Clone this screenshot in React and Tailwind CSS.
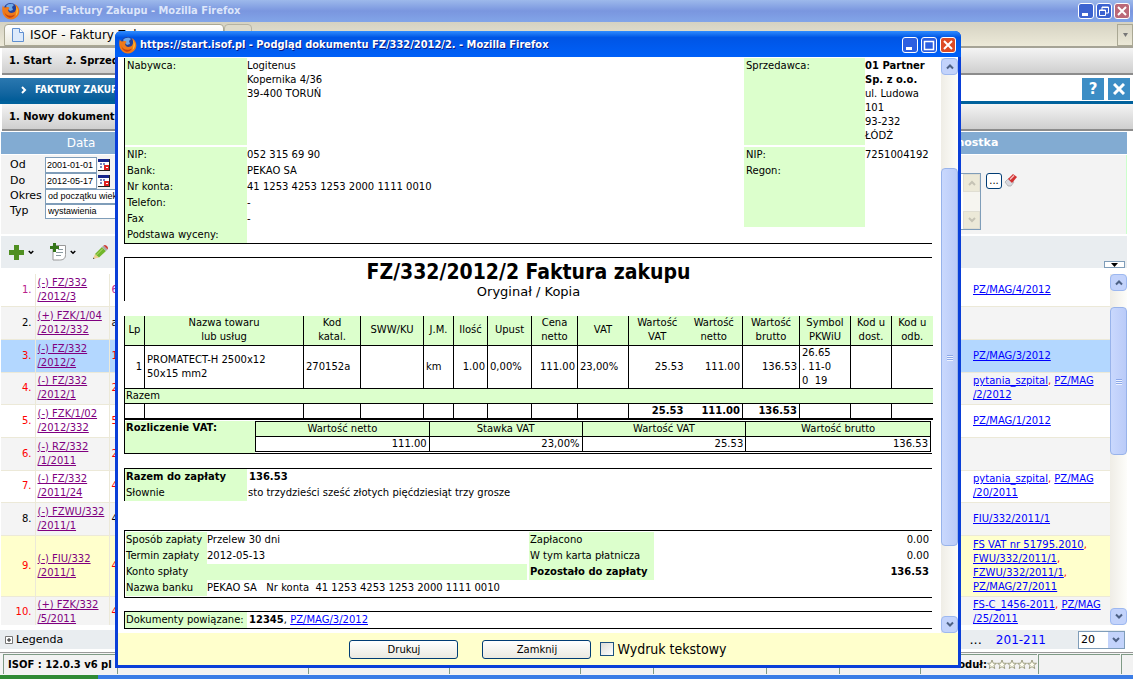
import React from "react";

const ROWS = [
  { no: "1.", color: "text-[#b8208c]", doc: ["(-) FZ/332", "/2012/3"], extra: "6", bg: "bg-white", links: [["PZ/MAG/4/2012"]] },
  { no: "2.", color: "text-black", doc: ["(+) FZK/1/04", "/2012/332"], extra: "a", bg: "bg-[#f4f4f4]", links: [] },
  { no: "3.", color: "text-[#ff0000]", doc: ["(-) FZ/332", "/2012/2"], extra: "1", bg: "bg-[#b3d7ff]", links: [["PZ/MAG/3/2012"]] },
  { no: "4.", color: "text-[#ff0000]", doc: ["(-) FZ/332", "/2012/1"], extra: "2", bg: "bg-[#f4f4f4]", links: [["pytania_szpital", "PZ/MAG"], ["/2/2012"]] },
  { no: "5.", color: "text-[#ff0000]", doc: ["(-) FZK/1/02", "/2012/332"], extra: "5", bg: "bg-white", links: [["PZ/MAG/1/2012"]] },
  { no: "6.", color: "text-[#ff0000]", doc: ["(-) RZ/332", "/1/2011"], extra: "2", bg: "bg-[#f4f4f4]", links: [] },
  { no: "7.", color: "text-[#ff0000]", doc: ["(-) FZ/332", "/2011/24"], extra: "4", bg: "bg-white", links: [["pytania_szpital", "PZ/MAG"], ["/20/2011"]] },
  { no: "8.", color: "text-black", doc: ["(-) FZWU/332", "/2011/1"], extra: "4", bg: "bg-[#f4f4f4]", links: [["FIU/332/2011/1"]] },
  { no: "9.", color: "text-[#ff0000]", doc: ["(-) FIU/332", "/2011/1"], extra: "4", bg: "bg-[#ffffcc]", links: [["FS VAT nr 51795.2010", ""], ["FWU/332/2011/1", ""], ["FZWU/332/2011/1", ""], ["PZ/MAG/27/2011"]] },
  { no: "10.", color: "text-[#ff0000]", doc: ["(+) FZK/332", "/5/2011"], extra: "4", bg: "bg-[#f4f4f4]", links: [["FS-C_1456-2011", "PZ/MAG"], ["/25/2011"]] },
];

const ITEM_COLUMNS = [
  { label: ["Lp"], width: "w-[20px]", value: ["1"], align: "text-right" },
  { label: ["Nazwa towaru", "lub usług"], width: "w-[159px]", value: ["PROMATECT-H 2500x12", "50x15 mm2"], align: "text-left" },
  { label: ["Kod", "katal."], width: "w-[57px]", value: ["270152a"], align: "text-left" },
  { label: ["SWW/KU"], width: "w-[63px]", value: [] },
  { label: ["J.M."], width: "w-[30px]", value: ["km"], align: "text-left" },
  { label: ["Ilość"], width: "w-[34px]", value: ["1.00"], align: "text-right" },
  { label: ["Upust"], width: "w-[44px]", value: ["0,00%"], align: "text-left" },
  { label: ["Cena", "netto"], width: "w-[46px]", value: ["111.00"], align: "text-right" },
  { label: ["VAT"], width: "w-[51px]", value: ["23,00%"], align: "text-left" },
  { label: ["Wartość", "VAT"], width: "w-[57px]", value: ["25.53"], align: "text-right", total: "25.53" },
  { label: ["Wartość", "netto"], width: "w-[57px]", value: ["111.00"], align: "text-right", total: "111.00", open: true },
  { label: ["Wartość", "brutto"], width: "w-[57px]", value: ["136.53"], align: "text-right", total: "136.53" },
  { label: ["Symbol", "PKWiU"], width: "w-[51px]", value: ["26.65", ". 11-0", "0  19"], align: "text-left" },
  { label: ["Kod u", "dost."], width: "w-[41px]", value: [] },
  { label: ["Kod u", "odb."], width: "w-[41px]", value: [] },
];

const VAT_COLUMNS = [
  { label: "Wartość netto", value: "111.00", width: "w-[174px]" },
  { label: "Stawka VAT", value: "23,00%", width: "w-[153px]" },
  { label: "Wartość VAT", value: "25.53", width: "w-[164px]" },
  { label: "Wartość brutto", value: "136.53", width: "w-[185px]" },
];

function FirefoxIcon() {
  return (
    <svg className="h-[18px] w-[18px] shrink-0" viewBox="0 0 18 18">
      <circle cx="8.5" cy="8" r="7" fill="#23419a" />
      <path d="M4 4c2-2.500 6-3 8-1l-2 2 1 3-3 1-2-2z" fill="#6fa8e8" />
      <path d="M1 3c0 2 1 2 2 2.500C5 4.500 7 5 7.500 6L6 8c.5 3 4 4 7 1.500C15 7 14 4 12.500 2 17 4 18.500 9 16.500 13c-2.500 4.500-9 6-13 2.500C0 12.500-.5 7 1 3z" fill="#ef7a1a" />
      <path d="M2 9c1 4 6 6.500 11 3.500-3 5-9 4.500-11-3.500z" fill="#c9410c" />
      <path d="M14 4c3 4 2 8-.5 10 1-3 1.500-6 .5-10z" fill="#fbc53a" />
    </svg>
  );
}

function Arrow({ up, className }) {
  return (
    <svg className={className} viewBox="0 0 8 6" fill="none" stroke="currentColor" strokeWidth="2">
      <path d={up ? "M1 5l3-3 3 3" : "M1 1l3 3 3-3"} />
    </svg>
  );
}

const winButton = "flex h-4 w-4 shrink-0 items-center justify-center rounded-[3px] border border-white";

function WindowButtons({ active }) {
  const blue = active ? "bg-[#2c5fe0]" : "bg-[#3c63d0]";
  return (
    <div className={`flex shrink-0 ${active ? "gap-[3px]" : "gap-[2px]"}`}>
      <button aria-label="Minimalizuj" className={`${winButton} ${blue}`}>
        <svg className="h-3 w-3" viewBox="0 0 12 12"><path d="M2 8h6v3H2z" fill="#fff" /></svg>
      </button>
      <button aria-label="Maksymalizuj" className={`${winButton} ${blue}`}>
        <svg className="h-3 w-3" viewBox="0 0 12 12" fill="none" stroke="#fff">
          {active ? <path d="M1.500 2.500h9v8h-9zM1 2.500h10" strokeWidth="1.500" /> : <path d="M1.500 5h6v5.500h-6zM4 5V2h6.500v6H8M1.500 5.500h6M4 2.500h6" />}
        </svg>
      </button>
      <button aria-label="Zamknij okno" className={`${winButton} ${active ? "bg-[#dd4a24]" : "bg-[#bb6878]"}`}>
        <svg className="h-3 w-3" viewBox="0 0 12 12"><path d="M2 2l8 8M10 2l-8 8" stroke="#fff" strokeWidth="2" /></svg>
      </button>
    </div>
  );
}

function ScrollBar({ thumb }) {
  const knob = "flex h-[17px] w-full shrink-0 items-center justify-center rounded-sm border border-[#9db8f0] bg-[#c3d3fb] text-[#4d6185]";
  return (
    <div className="flex w-[17px] shrink-0 flex-col bg-gradient-to-r from-[#efede6] to-[#fdfdfa]">
      <button aria-label="W górę" className={knob}><Arrow up className="h-[7px] w-2" /></button>
      <div className="min-h-0 flex-1">
        <div className={`flex w-full flex-col items-center justify-center gap-px rounded-sm border border-[#98b3ea] bg-gradient-to-r from-[#c9d8fd] to-[#bacbf8] ${thumb}`}>
          <span className="h-px w-[6px] bg-[#8ca8e8] shadow-[0_1px_#eef3ff]" />
          <span className="h-px w-[6px] bg-[#8ca8e8] shadow-[0_1px_#eef3ff]" />
          <span className="h-px w-[6px] bg-[#8ca8e8] shadow-[0_1px_#eef3ff]" />
        </div>
      </div>
      <button aria-label="W dół" className={knob}><Arrow className="h-[7px] w-2" /></button>
    </div>
  );
}

function CalendarIcon() {
  return (
    <svg className="h-3 w-3" viewBox="0 0 12 12">
      <path d="M0 0h12v12H0z" fill="#222" />
      <path d="M0 0h11v11H0z" fill="#fff" />
      <path d="M0 0h11v3H0z" fill="#16268c" />
      <path d="M2 4h2v2H2zM5 4h2v2H5zM2 7h2v2H2z" fill="#7888c0" />
      <path d="M6 6h5v5H6z" fill="#e02020" />
      <path d="M8 8h2v1H8z" fill="#fff" />
    </svg>
  );
}

function DateField({ id, label, value }) {
  return (
    <div className="flex h-4 items-center">
      <label htmlFor={id} className="w-[35px]">{label}</label>
      <input id={id} defaultValue={value} className="h-4 w-[52px] border border-[#7f9db9] bg-white pl-px font-['Liberation_Sans',sans-serif] text-[9px]" />
      <button aria-label="Kalendarz" className="ml-px"><CalendarIcon /></button>
    </div>
  );
}

function SelectField({ id, label, value }) {
  return (
    <div className="flex h-[15px] items-center">
      <label htmlFor={id} className="w-[35px]">{label}</label>
      <select id={id} className="h-[15px] w-[110px] appearance-none border border-[#7f9db9] bg-white pl-[2px] font-['Liberation_Sans',sans-serif] text-[9px]">
        <option>{value}</option>
      </select>
    </div>
  );
}

function Toolbar({ items }) {
  return (
    <nav className="ml-[2px] flex h-[27px] shrink-0 items-center gap-[14px] border-b-2 border-[#8c8c8c] bg-gradient-to-b from-[#f4f4f4] to-[#cfcfcf] pl-[7px] text-[10px] font-bold">
      {items.map((item) => (
        <button key={item} className="whitespace-nowrap">{item}</button>
      ))}
    </nav>
  );
}

function DocumentList() {
  return (
    <div className="mr-[6px] ml-px flex min-h-0 flex-1">
      <div className="min-w-0 flex-1 overflow-hidden">
        <table className="w-full table-fixed border-collapse leading-[14px]">
          <colgroup>
            <col className="w-[34px]" />
            <col className="w-[74px]" />
            <col />
            <col className="w-[146px]" />
          </colgroup>
          <tbody>
            {ROWS.map((row) => (
              <tr key={row.no} className={`h-[33px] border-b border-[#ece9d8] nth-[3n+1]:h-8 nth-[9]:h-[61px] ${row.bg}`}>
                <td className={`border-r border-[#ece9d8] py-0 pr-[3px] text-right ${row.color}`}>{row.no}</td>
                <td className="border-r border-[#ece9d8] py-0 pl-[2px] whitespace-nowrap">
                  <a href="#" className="text-[#800080] underline">{row.doc[0]}<br />{row.doc[1]}</a>
                </td>
                <td className={`py-0 pl-[2px] ${row.color}`}>{row.extra}</td>
                <td className="py-0 pl-[9px] whitespace-nowrap">
                  {row.links.map((line, i) => (
                    <div key={i}>
                      {line.map((link, j) => (
                        <React.Fragment key={j}>
                          {j > 0 && <span className="text-[#ff0000]">, </span>}
                          {link && <a href="#" className="text-[#0000ff] underline">{link}</a>}
                        </React.Fragment>
                      ))}
                    </div>
                  ))}
                </td>
              </tr>
            ))}
          </tbody>
        </table>
      </div>
      <ScrollBar thumb="mt-4 h-[148px]" />
    </div>
  );
}

function StatusCell({ className, children }) {
  return (
    <div className={`flex h-5 items-center border-t border-l border-[#7f9a86] bg-[#f2f2f2] text-[10px] leading-4 font-bold whitespace-nowrap ${className}`}>
      {children}
    </div>
  );
}

function MainWindow() {
  return (
    <div className="flex h-screen min-w-0 flex-col overflow-hidden bg-white">
      <header className="flex h-[22px] shrink-0 items-center gap-[3px] bg-gradient-to-b from-[#9db9eb] via-[#7a96df] to-[#82a5e8] pr-[3px] pl-[2px]">
        <FirefoxIcon />
        <span className="flex-1 font-['DejaVu_Sans_Condensed','DejaVu_Sans',sans-serif] text-[11px] font-bold text-[#dde6fa]">ISOF - Faktury Zakupu - Mozilla Firefox</span>
        <WindowButtons />
      </header>
      <div className="flex h-[26px] shrink-0 items-end border-b-2 border-[#a5a396] bg-gradient-to-b from-[#d5d2c2] to-[#ece9d8] pl-1">
        <div className="flex h-[22px] w-[220px] items-center gap-[6px] rounded-t border border-[#aaa894] bg-gradient-to-b from-white to-[#ebe9dc] pl-[7px] text-[12px]">
          <svg className="h-[14px] w-3" viewBox="0 0 12 14"><path d="M.5.5h7l4 4v9H.5z" fill="#dceafb" stroke="#5f8fd0" /><path d="M7.500.5v4h4" fill="#fff" stroke="#5f8fd0" /></svg>
          ISOF - Faktury Zakupu
        </div>
        <div className="h-[22px] w-7 rounded-t border border-[#b5b3a2] bg-[#dedbcb]" />
        <button aria-label="Lista kart" className="ml-auto flex h-[22px] w-4 items-center justify-center border border-[#aaa894] text-[#777]">
          <svg className="h-1 w-[5px]" viewBox="0 0 5 4"><path d="M0 0h5L2.500 4z" fill="currentColor" /></svg>
        </button>
      </div>
      <Toolbar items={["1. Start", "2. Sprzedaż"]} />
      <div className="mt-[3px] flex h-[26px] shrink-0 border-b-[3px] border-[#00619c]">
        <div className="flex w-[640px] items-center bg-gradient-to-b from-[#2a78b0] to-[#005c98] pl-5 font-['DejaVu_Sans_Condensed','DejaVu_Sans',sans-serif] text-[10px] font-bold text-white">
          <Arrow className="mr-[7px] h-[6px] w-2 -rotate-90" />
          FAKTURY ZAKUPU
        </div>
        <div className="flex flex-1 justify-end gap-1 pr-[3px]">
          <button className="h-[22px] w-[22px] bg-[#3c8dc5] text-[15px] leading-[20px] font-bold text-white">?</button>
          <button aria-label="Zamknij" className="flex h-[22px] w-[22px] items-center justify-center bg-[#3c8dc5]">
            <svg className="h-3 w-3" viewBox="0 0 12 12"><path d="M1 1l10 10M11 1L1 11" stroke="#fff" strokeWidth="3" /></svg>
          </button>
        </div>
      </div>
      <Toolbar items={["1. Nowy dokument"]} />
      <section className="mt-px mr-[6px] ml-px flex shrink-0 flex-col">
        <div className="flex h-[22px] items-center justify-between bg-[#82abd2] text-white">
          <h2 className="w-[160px] text-center text-[12px]">Data</h2>
          <h2 className="w-[190px] text-[11px] font-bold">Jednostka</h2>
        </div>
        <div className="mt-px flex h-[79px] justify-between border-r border-[#ccffcc] bg-[#f3f3f3] pl-[9px]">
          <div className="flex flex-col pt-[2px] text-[11px]">
            <DateField id="od" label="Od" value="2001-01-01" />
            <DateField id="do" label="Do" value="2012-05-17" />
            <SelectField id="okres" label="Okres" value="od początku wieku" />
            <SelectField id="typ" label="Typ" value="wystawienia" />
          </div>
          <div className="flex w-[202px] pt-[18px]">
            <div className="flex h-[57px] w-[57px] justify-end border border-[#7f9db9] bg-white">
              <div className="flex w-[17px] flex-col justify-between bg-[#f6f5f0] text-[#c5c3b5]">
                <span className="flex h-[18px] items-center justify-center border border-[#e0ded2] bg-[#ece9d8]"><Arrow up className="h-[6px] w-2" /></span>
                <span className="flex h-[18px] items-center justify-center border border-[#e0ded2] bg-[#ece9d8]"><Arrow className="h-[6px] w-2" /></span>
              </div>
            </div>
            <button className="ml-[5px] h-4 w-4 rounded-[3px] border border-[#003c74] bg-white text-[10px] leading-[12px]">...</button>
            <svg className="ml-[2px] h-[14px] w-[14px]" viewBox="0 0 14 14">
              <path d="M1 9l4-4 5 4-3 4H4z" fill="#d8d8de" stroke="#999" strokeWidth=".6" />
              <path d="M4 6l5-5 4 3-5 6z" fill="#d23030" />
              <path d="M6 6.500l4-4" stroke="#f2c0c0" strokeWidth="1.500" />
            </svg>
          </div>
        </div>
        <div className="mt-[2px] flex h-8 items-center gap-4 bg-[#e9edf0] pl-2">
          <button aria-label="Dodaj" className="flex items-center gap-1">
            <svg className="h-[15px] w-[15px]" viewBox="0 0 15 15"><path d="M5 0h5v5h5v5h-5v5H5v-5H0V5h5z" fill="#4f8f22" /></svg>
            <Arrow className="h-[5px] w-[6px]" />
          </button>
          <button aria-label="Kopiuj" className="flex items-center gap-[3px]">
            <svg className="h-[18px] w-[17px]" viewBox="0 0 17 18">
              <path d="M3 2.500h12.500v9c0 4-2 5.500-6 5.500H3z" fill="#fff" stroke="#999" />
              <path d="M8 6.500h5M6 9.500h7M6 12.500h5" stroke="#8a9aa0" />
              <path d="M3 0h3v3h3v3H6v3H3V6H0V3h3z" fill="#35761a" />
            </svg>
            <Arrow className="h-[5px] w-[6px]" />
          </button>
          <button aria-label="Edytuj">
            <svg className="h-[17px] w-[17px]" viewBox="0 0 17 17">
              <path d="M1 15l2-5 4 3.500z" fill="#f0d090" />
              <path d="M3 10l7-7 4 4-7 6.500z" fill="#72b62c" />
              <path d="M10 3l1.500-1.500 4 4L14 7z" fill="#aaa" />
              <path d="M11.500 1.500C13-.5 17.500 3 15.500 5.500z" fill="#d04038" />
              <path d="M1 15l.5-1.500 1 1z" fill="#222" />
              <path d="M4 11.500l7-7" stroke="#b8e070" />
            </svg>
          </button>
          <button aria-label="Rozwiń" className="mr-[2px] ml-auto flex h-[7px] w-[21px] items-center justify-center self-end border border-[#7f9db9] bg-white">
            <svg className="h-1 w-[7px]" viewBox="0 0 7 4"><path d="M0 0h7L3.500 4z" /></svg>
          </button>
        </div>
      </section>
      <div className="h-[6px] shrink-0" />
      <DocumentList />
      <div className="mt-[5px] mr-2 flex h-[19px] shrink-0 items-center bg-[#e9edf0] pl-[5px] text-[11px] leading-4">
        <button className="flex items-center gap-[3px]">
          <svg className="h-2 w-2" viewBox="0 0 8 8" fill="#fff" stroke="#777"><path d="M.5.5h7v7h-7z" /><path d="M4 2v4M2 4h4" stroke="#222" /></svg>
          Legenda
        </button>
        <span className="ml-auto text-[13px]">...</span>
        <a href="#" className="ml-[14px] text-[12px] text-[#0000ff]">201-211</a>
        <div className="ml-8 grid h-[18px] w-[47px]">
          <select aria-label="Na stronie" className="col-start-1 row-start-1 appearance-none border border-[#7f9db9] bg-white pl-[2px] text-[11px]">
            <option>20</option>
          </select>
          <span className="pointer-events-none col-start-1 row-start-1 my-px mr-px flex w-4 items-center justify-center justify-self-end bg-[#c3d3fb] text-[#4d6185]">
            <Arrow className="h-[6px] w-2" />
          </span>
        </div>
      </div>
      <footer className="mt-[3px] flex h-[23px] shrink-0 items-center gap-px border-t border-[#999] bg-[#f4f4f4] pl-[3px]">
        <StatusCell className="w-[113px] pl-1">ISOF : 12.0.3 v6 pl</StatusCell>
        <StatusCell className="w-[190px]" />
        <StatusCell className="w-[140px]" />
        <StatusCell className="w-[130px]" />
        <StatusCell className="w-[72px]" />
        <StatusCell className="w-[112px]" />
        <StatusCell className="w-[72px]" />
        <StatusCell className="w-[80px]" />
        <StatusCell className="flex-1 justify-end">
          Moduł:
          <svg className="h-[11px] w-[50px]" viewBox="0 0 50 11" fill="#fffef0" stroke="#8c8c6a" strokeWidth=".8">
            {[0, 10, 20, 30, 40].map((x) => (
              <path key={x} d={`M${x + 5} 1l1.200 3.200 3.300.1-2.600 2 .9 3.200L${x + 5} 7.700l-2.800 1.800.9-3.200-2.600-2 3.300-.1z`} />
            ))}
          </svg>
        </StatusCell>
        <StatusCell className="w-[82px]" />
        <StatusCell className="w-3" />
      </footer>
      <div className="flex h-1 shrink-0 bg-[#3a7ce6]"><div className="w-[98px] bg-[#2f8a34]" /></div>
    </div>
  );
}

function PartyLabels({ items, className = "" }) {
  return (
    <div className={`bg-[#dcffcc] pl-[2px] leading-4 ${className}`}>
      {items.map((item) => <div key={item}>{item}</div>)}
    </div>
  );
}

function Parties() {
  return (
    <section className="grid grid-cols-[122px_1fr_121px_67px] gap-y-[2px] border-b border-l border-black">
      <div className="h-[87px] bg-[#dcffcc] pt-px pl-[2px]">Nabywca:</div>
      <div className="pt-px">Logitenus<br />Kopernika 4/36<br />39-400 TORUŃ</div>
      <div className="bg-[#dcffcc] pt-px pl-[2px]">Sprzedawca:</div>
      <div className="pt-px whitespace-nowrap">
        <b>01 Partner<br />Sp. z o.o.</b><br />ul. Ludowa<br />101<br />93-232<br />ŁÓDŹ
      </div>
      <PartyLabels items={["NIP:", "Bank:", "Nr konta:", "Telefon:", "Fax", "Podstawa wyceny:"]} />
      <div className="leading-4">
        <div>052 315 69 90</div>
        <div>PEKAO SA</div>
        <div>41 1253 4253 1253 2000 1111 0010</div>
        <div>-</div>
        <div>-</div>
      </div>
      <PartyLabels items={["NIP:", "Regon:"]} className="mb-4" />
      <div className="leading-4">7251004192</div>
    </section>
  );
}

function Items() {
  return (
    <table className="w-full table-fixed border-collapse">
      <colgroup>
        {ITEM_COLUMNS.map((col, i) => <col key={i} className={col.width} />)}
      </colgroup>
      <thead>
        <tr className="h-[29px] border-b border-black bg-[#dcffcc]">
          {ITEM_COLUMNS.map((col, i) => (
            <th key={i} className={`p-0 text-center font-normal whitespace-nowrap ${col.open ? "" : "border-l border-black"}`}>
              {col.label.map((line) => <div key={line}>{line}</div>)}
            </th>
          ))}
        </tr>
      </thead>
      <tbody>
        <tr className="h-[43px] border-b border-black">
          {ITEM_COLUMNS.map((col, i) => (
            <td key={i} className={`px-[2px] py-0 whitespace-pre ${col.align || ""} ${col.open ? "" : "border-l border-black"}`}>
              {col.value.map((line) => <div key={line}>{line}</div>)}
            </td>
          ))}
        </tr>
        <tr className="h-[15px] border-b border-l border-black bg-[#dcffcc]">
          <td colSpan={15} className="px-px py-0">Razem</td>
        </tr>
        <tr className="h-4 border-b-2 border-black">
          {ITEM_COLUMNS.map((col, i) => (
            <td key={i} className={`px-[2px] py-0 text-right font-bold ${col.open ? "" : "border-l border-black"}`}>{col.total}</td>
          ))}
        </tr>
      </tbody>
    </table>
  );
}

function VatSummary() {
  return (
    <section className="flex border-b border-l border-black pt-px">
      <div className="w-[130px] shrink-0 bg-[#dcffcc] pl-px font-bold">Rozliczenie VAT:</div>
      <table className="mr-px mb-px flex-1 table-fixed border-collapse border border-black">
        <thead>
          <tr className="h-[15px] bg-[#dcffcc]">
            {VAT_COLUMNS.map((col) => <th key={col.label} className={`border border-black p-0 font-normal ${col.width}`}>{col.label}</th>)}
          </tr>
        </thead>
        <tbody>
          <tr className="h-[15px]">
            {VAT_COLUMNS.map((col) => <td key={col.label} className="border border-black py-0 pr-[2px] text-right">{col.value}</td>)}
          </tr>
        </tbody>
      </table>
    </section>
  );
}

function Payment() {
  return (
    <section className="flex border-y border-l border-black py-px pl-px leading-4">
      <div className="min-w-0 flex-1">
        <div className="flex"><span className="w-[81px] bg-[#dcffcc] whitespace-nowrap">Sposób zapłaty</span><span>Przelew 30 dni</span></div>
        <div className="flex"><span className="w-[81px] bg-[#dcffcc] whitespace-nowrap">Termin zapłaty</span><span>2012-05-13</span></div>
        <div className="mr-[2px] bg-[#dcffcc]">Konto spłaty</div>
        <div className="flex"><span className="w-[81px] bg-[#dcffcc]">Nazwa banku</span><span className="whitespace-pre">PEKAO SA   Nr konta  41 1253 4253 1253 2000 1111 0010</span></div>
      </div>
      <dl className="grid w-1/2 grid-cols-[125px_1fr] content-start">
        <dt className="bg-[#dcffcc] pl-px">Zapłacono</dt>
        <dd className="pr-[3px] text-right">0.00</dd>
        <dt className="bg-[#dcffcc] pl-px">W tym karta płatnicza</dt>
        <dd className="pr-[3px] text-right">0.00</dd>
        <dt className="bg-[#dcffcc] pl-px font-bold whitespace-nowrap">Pozostało do zapłaty</dt>
        <dd className="pr-[3px] text-right font-bold">136.53</dd>
      </dl>
    </section>
  );
}

function PreviewWindow() {
  return (
    <div role="dialog" aria-label="Podgląd dokumentu" className="absolute top-[31px] right-[172px] bottom-[11px] left-[115px] flex flex-col overflow-hidden rounded-t-md bg-[#0a3fd8]">
      <header className="flex h-[26px] shrink-0 items-center gap-[3px] bg-gradient-to-b from-[#2f8cff] via-[#0055e5] via-25% to-[#0060f8] pt-[2px] pr-[5px] pl-1">
        <FirefoxIcon />
        <span className="flex-1 font-['DejaVu_Sans_Condensed','DejaVu_Sans',sans-serif] text-[11px] font-bold whitespace-nowrap text-white [text-shadow:1px_1px_#0a1883]">
          https://start.isof.pl - Podgląd dokumentu FZ/332/2012/2. - Mozilla Firefox
        </span>
        <WindowButtons active />
      </header>
      <div className="mx-[3px] mb-[3px] flex min-h-0 flex-1 flex-col bg-[#ffffcc]">
        <div className="flex min-h-0 flex-1 bg-white pt-px">
          <main className="min-w-0 flex-1 overflow-hidden pr-[9px] pl-[6px] leading-[14px]">
            <Parties />
            <section className="mt-[13px] h-[44px] border-t border-l border-black text-center">
              <h1 className="pt-[2px] font-['DejaVu_Sans_Condensed','DejaVu_Sans',sans-serif] text-[21px] leading-6 font-bold">FZ/332/2012/2 Faktura zakupu</h1>
              <p className="text-[13px] leading-4">Oryginał / Kopia</p>
            </section>
            <div className="mt-[15px]"><Items /></div>
            <VatSummary />
            <section className="mt-[14px] border-t border-l border-black leading-4">
              <div className="flex"><b className="w-[122px] bg-[#dcffcc] pl-px">Razem do zapłaty</b><b className="pl-[2px]">136.53</b></div>
              <div className="flex"><span className="w-[122px] bg-[#dcffcc] pl-px">Słownie</span><span className="pl-px">sto trzydzieści sześć złotych pięćdziesiąt trzy grosze</span></div>
            </section>
            <div className="mt-[29px]"><Payment /></div>
            <section className="mt-[13px] flex border-y border-l border-black leading-4">
              <span className="w-[122px] bg-[#dcffcc] pl-px whitespace-nowrap">Dokumenty powiązane:</span>
              <span className="pl-[2px]"><b>12345</b>, <a href="#" className="text-[#0000ff] underline">PZ/MAG/3/2012</a></span>
            </section>
          </main>
          <ScrollBar thumb="mt-[93px] h-[378px]" />
        </div>
        <footer className="flex h-8 shrink-0 items-center justify-center">
          <button className="mr-6 h-[19px] w-[109px] rounded-[3px] border border-[#003c74] bg-gradient-to-b from-white to-[#ebe9e0] text-[10px]">Drukuj</button>
          <button className="mr-[9px] h-[19px] w-[109px] rounded-[3px] border border-[#003c74] bg-gradient-to-b from-white to-[#ebe9e0] text-[10px]">Zamknij</button>
          <label className="flex items-center gap-[3px] font-['DejaVu_Sans_Condensed','DejaVu_Sans',sans-serif] text-[14px]">
            <input type="checkbox" className="h-[14px] w-[14px] appearance-none border border-[#1c5180] bg-gradient-to-br from-[#dcdcd7] to-white" />
            Wydruk tekstowy
          </label>
        </footer>
      </div>
    </div>
  );
}

export default function App() {
  return (
    <div className="relative font-['DejaVu_Sans',sans-serif] text-[10px] text-black">
      <MainWindow />
      <PreviewWindow />
    </div>
  );
}
